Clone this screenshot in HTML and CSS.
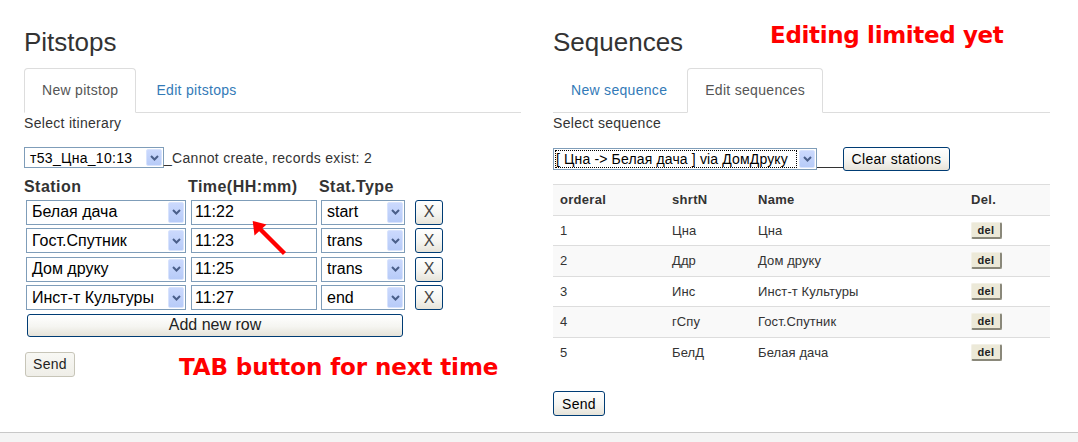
FILE: index.html
```html
<!DOCTYPE html>
<html>
<head>
<meta charset="utf-8">
<title>Pitstops</title>
<link rel="stylesheet" href="styles.css">
</head>
<body>
<div class="page">
  <section class="col col-left">
    <div class="head-row">
      <h2 class="title">Pitstops</h2>
    </div>
    <ul class="tabs">
      <li class="tab active">New pitstop</li>
      <li class="tab">Edit pitstops</li>
    </ul>
    <div class="label">Select itinerary</div>
    <div class="itin-row">
      <div class="xsel xsel-itin">
        <span class="xsel-text">т53_Цна_10:13</span>
        <span class="xsel-btn"><svg width="9" height="6" viewBox="0 0 9 6"><path d="M1 1 L4.5 4.5 L8 1" fill="none" stroke="#4a5f8a" stroke-width="2"/></svg></span>
      </div>
      <span class="note">_Cannot create, records exist: 2</span>
    </div>

    <div class="stops">
      <div class="th">Station</div>
      <div class="th">Time(HH:mm)</div>
      <div class="th">Stat.Type</div>
      <div></div>

      <div class="xsel xsel-station"><span class="xsel-text">Белая дача</span><span class="xsel-btn"><svg width="9" height="6" viewBox="0 0 9 6"><path d="M1 1 L4.5 4.5 L8 1" fill="none" stroke="#4a5f8a" stroke-width="2"/></svg></span></div>
      <input class="time" value="11:22">
      <div class="xsel xsel-type"><span class="xsel-text">start</span><span class="xsel-btn"><svg width="9" height="6" viewBox="0 0 9 6"><path d="M1 1 L4.5 4.5 L8 1" fill="none" stroke="#4a5f8a" stroke-width="2"/></svg></span></div>
      <button class="xpbtn xbtn">X</button>

      <div class="xsel xsel-station"><span class="xsel-text">Гост.Спутник</span><span class="xsel-btn"><svg width="9" height="6" viewBox="0 0 9 6"><path d="M1 1 L4.5 4.5 L8 1" fill="none" stroke="#4a5f8a" stroke-width="2"/></svg></span></div>
      <input class="time" value="11:23">
      <div class="xsel xsel-type"><span class="xsel-text">trans</span><span class="xsel-btn"><svg width="9" height="6" viewBox="0 0 9 6"><path d="M1 1 L4.5 4.5 L8 1" fill="none" stroke="#4a5f8a" stroke-width="2"/></svg></span></div>
      <button class="xpbtn xbtn">X</button>

      <div class="xsel xsel-station"><span class="xsel-text">Дом друку</span><span class="xsel-btn"><svg width="9" height="6" viewBox="0 0 9 6"><path d="M1 1 L4.5 4.5 L8 1" fill="none" stroke="#4a5f8a" stroke-width="2"/></svg></span></div>
      <input class="time" value="11:25">
      <div class="xsel xsel-type"><span class="xsel-text">trans</span><span class="xsel-btn"><svg width="9" height="6" viewBox="0 0 9 6"><path d="M1 1 L4.5 4.5 L8 1" fill="none" stroke="#4a5f8a" stroke-width="2"/></svg></span></div>
      <button class="xpbtn xbtn">X</button>

      <div class="xsel xsel-station"><span class="xsel-text">Инст-т Культуры</span><span class="xsel-btn"><svg width="9" height="6" viewBox="0 0 9 6"><path d="M1 1 L4.5 4.5 L8 1" fill="none" stroke="#4a5f8a" stroke-width="2"/></svg></span></div>
      <input class="time" value="11:27">
      <div class="xsel xsel-type"><span class="xsel-text">end</span><span class="xsel-btn"><svg width="9" height="6" viewBox="0 0 9 6"><path d="M1 1 L4.5 4.5 L8 1" fill="none" stroke="#4a5f8a" stroke-width="2"/></svg></span></div>
      <button class="xpbtn xbtn">X</button>

      <button class="xpbtn addrow">Add new row</button>
    </div>

    <div class="send-row">
      <button class="plainbtn">Send</button>
      <span class="annot annot-tab">TAB button for next time</span>
    </div>

    <svg class="arrow" width="40" height="42" viewBox="0 0 40 42">
      <line x1="9" y1="13" x2="34.5" y2="38.5" stroke="#ff0000" stroke-width="4.5"/>
      <polygon points="2.7,6 4.5,20.5 16.5,9.5" fill="#ff0000"/>
    </svg>
  </section>

  <section class="col col-right">
    <div class="head-row">
      <h2 class="title">Sequences</h2>
      <span class="annot annot-edit">Editing limited yet</span>
    </div>
    <ul class="tabs">
      <li class="tab">New sequence</li>
      <li class="tab active">Edit sequences</li>
    </ul>
    <div class="label">Select sequence</div>
    <div class="seq-row">
      <div class="xsel xsel-seq">
        <span class="xsel-text focus">[ Цна -&gt; Белая дача ] via ДомДруку</span>
        <span class="xsel-btn"><svg width="9" height="6" viewBox="0 0 9 6"><path d="M1 1 L4.5 4.5 L8 1" fill="none" stroke="#4a5f8a" stroke-width="2"/></svg></span>
      </div>
      <span class="gapline"></span>
      <button class="xpbtn clearbtn">Clear stations</button>
    </div>

    <table class="seq-table">
      <colgroup><col class="c1"><col class="c2"><col class="c3"><col class="c4"></colgroup>
      <tbody>
        <tr><th>orderal</th><th>shrtN</th><th>Name</th><th>Del.</th></tr>
        <tr><td>1</td><td>Цна</td><td>Цна</td><td><button class="del">del</button></td></tr>
        <tr><td>2</td><td>Ддр</td><td>Дом друку</td><td><button class="del">del</button></td></tr>
        <tr><td>3</td><td>Инс</td><td>Инст-т Культуры</td><td><button class="del">del</button></td></tr>
        <tr><td>4</td><td>гСпу</td><td>Гост.Спутник</td><td><button class="del">del</button></td></tr>
        <tr><td>5</td><td>БелД</td><td>Белая дача</td><td><button class="del">del</button></td></tr>
      </tbody>
    </table>

    <button class="xpbtn sendbtn">Send</button>
  </section>
</div>
<footer class="footer"></footer>
</body>
</html>
```

FILE: styles.css
```css
html, body {
  margin: 0;
  padding: 0;
}
body {
  font-family: "Liberation Sans", Arial, sans-serif;
  font-size: 14px;
  letter-spacing: 0.3px;
  color: #333;
  background: #fff;
}
.page {
  display: flex;
  gap: 32px;
  padding-left: 24px;
  height: 432px;
  box-sizing: border-box;
}
.col {
  flex: none;
  width: 497px;
  position: relative;
}
.head-row {
  display: flex;
  align-items: flex-start;
  margin-bottom: 11px;
}
.title {
  margin: 28px 0 0;
  font-size: 26px;
  font-weight: normal;
  line-height: 29px;
  letter-spacing: 0;
  color: #333;
}
.annot {
  font-family: "DejaVu Sans", Verdana, sans-serif;
  font-weight: bold;
  font-size: 23px;
  line-height: 27px;
  letter-spacing: 0;
  color: #ff0000;
}
.annot-edit {
  margin-top: 22px;
  margin-left: 87px;
  letter-spacing: -0.35px;
}
.tabs {
  list-style: none;
  margin: 0;
  padding: 0;
  display: flex;
  border-bottom: 1px solid #ddd;
}
.tab {
  margin-right: 2px;
  margin-bottom: -1px;
  padding: 11px 17px;
  line-height: 21px;
  border: 1px solid transparent;
  border-radius: 4px 4px 0 0;
  color: #337ab7;
}
.tab.active {
  color: #555;
  background: #fff;
  border-color: #ddd #ddd transparent;
}
.label {
  line-height: 20px;
}

/* XP-like select */
.xsel {
  display: flex;
  box-sizing: border-box;
  border: 1px solid #7f9db9;
  background: #fff;
  color: #000;
}
.xsel-text {
  flex: 1;
  min-width: 0;
  overflow: hidden;
  white-space: nowrap;
  padding-left: 5px;
  display: flex;
  align-items: center;
}
.xsel-btn {
  flex: none;
  width: 14px;
  margin: 1px;
  border: 1px solid #d8e3fd;
  border-radius: 2px;
  background: linear-gradient(#cbd9fd, #b7cbf8);
  display: flex;
  align-items: center;
  justify-content: center;
}
.xsel-itin {
  width: 140px;
  height: 21px;
}
.itin-row {
  display: flex;
  align-items: center;
  margin-top: 14px;
}
.note {
  color: #333;
}

/* pitstop grid */
.stops {
  display: grid;
  grid-template-columns: 164px 131px 96px 28px;
  row-gap: 3.5px;
  margin-top: 9px;
}
.th {
  font-weight: bold;
  font-size: 16px;
  letter-spacing: 0.45px;
  line-height: 20px;
  color: #333;
  margin-bottom: -1px;
}
.xsel-station,
.xsel-type,
.time {
  height: 25px;
  font-size: 16px;
  letter-spacing: 0;
}
.xsel-station {
  margin-left: 2px;
  width: 160px;
}
.xsel-type {
  margin-left: 2px;
  width: 84px;
}
.time {
  margin: 0 0 0 3px;
  width: 126px;
  box-sizing: border-box;
  border: 1px solid #7f9db9;
  padding: 0 3px;
  font-family: inherit;
  color: #000;
  outline: none;
}
.xpbtn {
  box-sizing: border-box;
  border: 1px solid #003c74;
  border-radius: 3px;
  background: linear-gradient(#ffffff 0%, #f5f5f1 55%, #e6e3d9 100%);
  color: #000;
  font-family: inherit;
  padding: 0;
  margin: 0;
}
.xbtn {
  width: 28px;
  height: 25px;
  font-size: 16px;
  font-weight: normal;
  letter-spacing: 0;
  color: #444;
}
.addrow {
  grid-column: 1 / 4;
  margin-left: 3px;
  width: 376px;
  height: 23px;
  font-size: 16px;
  letter-spacing: 0;
  color: #222;
}
.send-row {
  display: flex;
  align-items: flex-start;
  margin-top: 15px;
}
.plainbtn {
  box-sizing: border-box;
  width: 50px;
  height: 25px;
  border: 1px solid #c7c5b8;
  border-radius: 3px;
  background: linear-gradient(#f8f8f4, #efeee8);
  font-family: inherit;
  font-size: 14px;
  letter-spacing: 0.3px;
  color: #222;
  padding: 0;
  margin: 0 0 0 1px;
}
.annot-tab {
  margin-left: 104px;
  margin-top: 2px;
  letter-spacing: -0.1px;
}
.arrow {
  position: absolute;
  left: 226px;
  top: 215px;
}

/* right column */
.seq-row {
  display: flex;
  align-items: flex-start;
  margin-top: 14px;
}
.xsel-seq {
  width: 264px;
  height: 22px;
  margin-top: 1px;
  font-size: 14px;
  letter-spacing: 0.15px;
}
.xsel-text.focus {
  padding-left: 1px;
  margin: 1px;
  outline: 1px dotted #000;
  outline-offset: -1px;
}
.gapline {
  width: 26px;
  height: 1px;
  margin-top: 20px;
  background: #333;
}
.clearbtn {
  width: 107px;
  height: 24px;
  font-size: 14px;
  letter-spacing: 0.3px;
}
.seq-table {
  width: 497px;
  margin-top: 13px;
  border-collapse: collapse;
  table-layout: fixed;
  font-size: 13px;
  letter-spacing: 0.1px;
}
.c1 { width: 112px; }
.c2 { width: 86px; }
.c3 { width: 213px; }
.c4 { width: 86px; }
.seq-table th,
.seq-table td {
  text-align: left;
  padding: 6px 7px;
  line-height: 17.5px;
  height: 17.5px;
  border-top: 1px solid #ddd;
  vertical-align: middle;
  color: #333;
}
.seq-table th {
  font-weight: bold;
  letter-spacing: 0.3px;
}
.seq-table tr:nth-child(odd) {
  background: #f9f9f9;
}
.del {
  box-sizing: border-box;
  width: 31px;
  height: 17px;
  padding: 0;
  margin: 0;
  font-family: inherit;
  font-weight: bold;
  font-size: 11px;
  letter-spacing: 0.3px;
  color: #222;
  background: #ece9d8;
  border-style: solid;
  border-width: 1px 2px 2px 1px;
  border-color: #f2f0e6 #8a887a #8a887a #f2f0e6;
  border-radius: 2px;
  display: block;
}
.sendbtn {
  display: block;
  margin-top: 24px;
  width: 52px;
  height: 25px;
  font-size: 14px;
  letter-spacing: 0.3px;
}
.footer {
  height: 9px;
  border-top: 1px solid #c8c8c8;
  background: #f4f4f4;
}
```
